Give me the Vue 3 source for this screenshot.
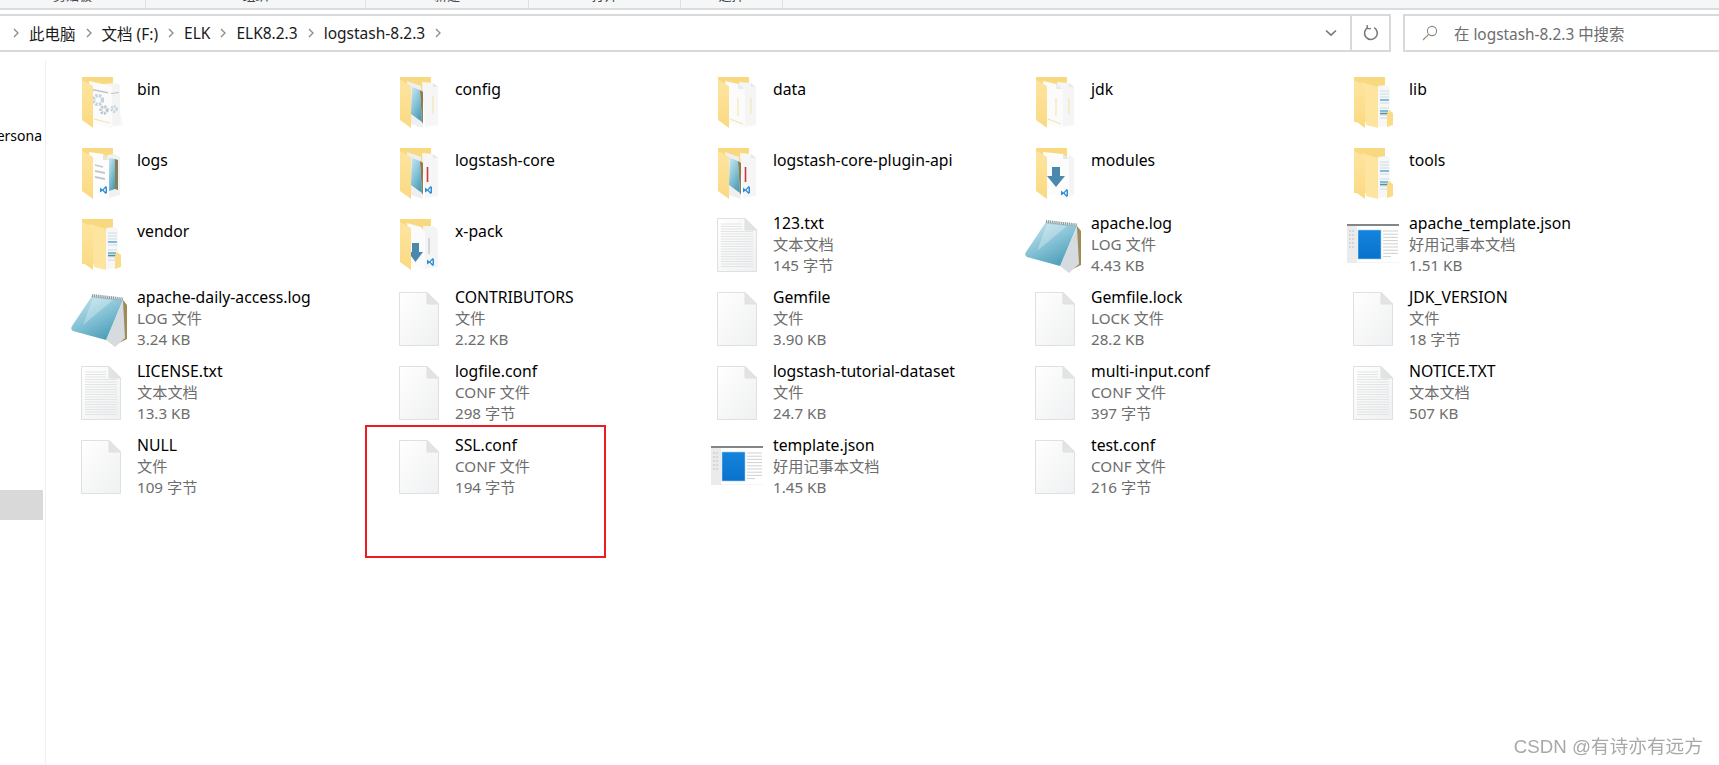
<script setup>
const ribbon = [
  { label: '剪贴板', width: 146 },
  { label: '组织', width: 220 },
  { label: '新建', width: 163 },
  { label: '打开', width: 152 },
  { label: '选择', width: 102 },
]
const crumbs = ['此电脑', '文档 (F:)', 'ELK', 'ELK8.2.3', 'logstash-8.2.3']
const files = [
  { name: 'bin', icon: 'f-gear' }, { name: 'config', icon: 'f-note' }, { name: 'data', icon: 'f-doc' }, { name: 'jdk', icon: 'f-doc' }, { name: 'lib', icon: 'f-strip' },
  { name: 'logs', icon: 'f-logs' }, { name: 'logstash-core', icon: 'f-core' }, { name: 'logstash-core-plugin-api', icon: 'f-core' }, { name: 'modules', icon: 'f-arrow' }, { name: 'tools', icon: 'f-strip' },
  { name: 'vendor', icon: 'f-strip' }, { name: 'x-pack', icon: 'f-pack' },
  { name: '123.txt', type: '文本文档', size: '145 字节', icon: 'txt' },
  { name: 'apache.log', type: 'LOG 文件', size: '4.43 KB', icon: 'pad' },
  { name: 'apache_template.json', type: '好用记事本文档', size: '1.51 KB', icon: 'tpl' },
  { name: 'apache-daily-access.log', type: 'LOG 文件', size: '3.24 KB', icon: 'pad' },
  { name: 'CONTRIBUTORS', type: '文件', size: '2.22 KB', icon: 'page' },
  { name: 'Gemfile', type: '文件', size: '3.90 KB', icon: 'page' },
  { name: 'Gemfile.lock', type: 'LOCK 文件', size: '28.2 KB', icon: 'page' },
  { name: 'JDK_VERSION', type: '文件', size: '18 字节', icon: 'page' },
  { name: 'LICENSE.txt', type: '文本文档', size: '13.3 KB', icon: 'txt' },
  { name: 'logfile.conf', type: 'CONF 文件', size: '298 字节', icon: 'page' },
  { name: 'logstash-tutorial-dataset', type: '文件', size: '24.7 KB', icon: 'page' },
  { name: 'multi-input.conf', type: 'CONF 文件', size: '397 字节', icon: 'page' },
  { name: 'NOTICE.TXT', type: '文本文档', size: '507 KB', icon: 'txt' },
  { name: 'NULL', type: '文件', size: '109 字节', icon: 'page' },
  { name: 'SSL.conf', type: 'CONF 文件', size: '194 字节', icon: 'page', marked: true },
  { name: 'template.json', type: '好用记事本文档', size: '1.45 KB', icon: 'tpl' },
  { name: 'test.conf', type: 'CONF 文件', size: '216 字节', icon: 'page' },
]
const txtLines = Array.from({ length: 18 }, (_, i) => 10 + i * 2.5)
const tplLines = Array.from({ length: 9 }, (_, i) => 17 + i * 3.2)
</script>

<template>
  <div class="window">
    <svg class="defs" width="0" height="0" aria-hidden="true">
      <defs>
        <linearGradient id="gPage" x1="0" y1="0" x2="1" y2="1">
          <stop offset="0" stop-color="#ffffff" />
          <stop offset="1" stop-color="#eff0f1" />
        </linearGradient>
        <linearGradient id="gFlap" x1="0" y1="0" x2="0" y2="1">
          <stop offset="0" stop-color="#fde5a0" />
          <stop offset="1" stop-color="#fbd981" />
        </linearGradient>
        <linearGradient id="gTeal" x1="0" y1="0" x2="0.6" y2="1">
          <stop offset="0" stop-color="#cfe8ef" />
          <stop offset="0.55" stop-color="#86c3d6" />
          <stop offset="1" stop-color="#4f9fba" />
        </linearGradient>
        <linearGradient id="gBlue" x1="0" y1="0" x2="0" y2="1">
          <stop offset="0" stop-color="#1384dc" />
          <stop offset="1" stop-color="#0a72cc" />
        </linearGradient>

        <g id="vs">
          <path d="M0 3.5 L2.5 5.5 L5.5 2 L7 3 V9 L5.5 10 L2.5 6.7 L0 8.5Z" fill="#2e8fd6" />
          <path d="M5.5 4 V8 L3.6 6Z" fill="#fff" />
        </g>
        <g id="back">
          <path d="M13 5 H44 V30 H13Z" fill="#f9d97f" />
        </g>
        <path id="flap" d="M13 8 L24 14 V56 L13 48Z" fill="url(#gFlap)" />
        <g id="sheets">
          <path d="M33 12 L47 11 L51 13 V52 L36 55Z" fill="#f4f4f4" />
          <path d="M20 9 L38 13 L43 15 V56 L24 51Z" fill="#fbfbfb" />
        </g>

        <g id="f-gear">
          <use href="#back" />
          <use href="#sheets" />
          <path d="M24 17 L39 20 V21.5 L24 18.5Z M42 21 L50 20 V21 L42 22Z" fill="#bfc3c6" />
          <circle cx="29" cy="28" r="4.5" fill="none" stroke="#c6d2db" stroke-width="3.4" stroke-dasharray="2.4 1.2" />
          <circle cx="35" cy="38" r="3.2" fill="none" stroke="#b8c6d0" stroke-width="3" stroke-dasharray="2 1" />
          <circle cx="45" cy="37" r="2.5" fill="none" stroke="#c6d2db" stroke-width="2.6" stroke-dasharray="1.8 1" />
          <path d="M25 47 L41 51" stroke="#f4e3a8" stroke-width="1" />
          <path d="M51 40 L54 53 L44 55Z" fill="#f2f2f2" opacity=".6" />
          <use href="#flap" />
        </g>
        <g id="f-note">
          <use href="#back" />
          <path d="M35 10 L46 11 L51 15 V53 L38 55Z" fill="#f6f6f6" />
          <path d="M46 11 V15 H51Z" fill="#e6e6e6" />
          <path d="M46 24 V42" stroke="#f4e3a8" stroke-width="1" />
          <path d="M20 9 L34 14 L36 56 L24 52Z" fill="#efefef" />
          <path d="M25 15 L33 18 L35 50 L24 42Z" fill="url(#gTeal)" />
          <path d="M33 18 L36 20 V52 L35 50Z" fill="#8a7d55" />
          <use href="#flap" />
        </g>
        <g id="f-core">
          <use href="#back" />
          <path d="M35 10 L46 11 L51 15 V53 L38 55Z" fill="#f6f6f6" />
          <path d="M46 11 V15 H51Z" fill="#e6e6e6" />
          <path d="M40.5 24 V39" stroke="#c73b3f" stroke-width="1.6" />
          <use href="#vs" transform="translate(38 41)" />
          <path d="M20 9 L34 14 L36 56 L24 52Z" fill="#efefef" />
          <path d="M25 15 L33 18 L35 50 L24 42Z" fill="url(#gTeal)" />
          <path d="M33 18 L36 20 V52 L35 50Z" fill="#8a7d55" />
          <use href="#flap" />
        </g>
        <g id="f-doc">
          <use href="#back" />
          <path d="M34 10 L46 11 L51 15 V53 L38 55Z" fill="#f5f5f5" />
          <path d="M46 11 V15 H51Z" fill="#e8e8e8" />
          <path d="M20 9 L33 12 L40 17 V56 L24 51Z" fill="#fbfbfb" />
          <path d="M33 12 V17 H40Z" fill="#ececec" />
          <path d="M33 26 V44 M46 26 V42" stroke="#f4e3a8" stroke-width="1" />
          <path d="M25 47 L38 52" stroke="#f4e3a8" stroke-width="1" />
          <use href="#flap" />
        </g>
        <g id="f-strip">
          <path d="M13 5 H44 V50 H13Z" fill="#f9d97f" />
          <path d="M37 14 L46 13 L49 16 V54 L37 55Z" fill="#f7f7f7" />
          <path d="M39 19 H48 M39 22 H48 M39 25 H48 M39 31 H48 M39 36 H48 M39 43 H48 M39 46 H48" stroke="#c9dce6" stroke-width="1" />
          <path d="M39 28 H48 M39 39 H47" stroke="#5ba9cf" stroke-width="1.6" />
          <path d="M39 41.5 H48" stroke="#5f8f8f" stroke-width="1.6" />
          <path d="M48 38 L52 41 V53 L46 55 V42Z" fill="#fbdc86" />
          <path d="M20 10 L37 15 V56 L25 53Z" fill="#fde5a0" />
          <use href="#flap" />
        </g>
        <g id="f-logs">
          <use href="#back" />
          <path d="M38 12 L45 11 L51 14 V52 L40 55Z" fill="#f1f1f1" />
          <path d="M40 15 L46 16 V46 L40 48Z" fill="url(#gTeal)" />
          <path d="M46 16 L49 17 V47 L46 46Z" fill="#8a7d55" />
          <path d="M20 9 L34 11 L40 17 V57 L24 51Z" fill="#fdfdfd" />
          <path d="M34 11 V17 H40Z" fill="#e9e6d8" />
          <path d="M26 22 L34 24 M26 28 L36 30 M26 34 L36 36" stroke="#c4c8cb" stroke-width="1.8" />
          <use href="#vs" transform="translate(31 41)" />
          <use href="#flap" />
        </g>
        <g id="f-arrow">
          <use href="#back" />
          <path d="M46 11 L51 15 V52 L42 55Z" fill="#f4f4f4" />
          <path d="M20 9 L40 11 L46 16 V55 L24 51Z" fill="#fcfcfc" />
          <path d="M40 11 V16 H46Z" fill="#e6e6e6" />
          <path d="M29 24 H37 V33 H42 L33 44 L24 33 H29Z" fill="#4a89ad" />
          <use href="#vs" transform="translate(38 44)" />
          <use href="#flap" />
        </g>
        <g id="f-pack">
          <use href="#back" />
          <path d="M36 12 L46 12 L51 15 V53 L38 55Z" fill="#f4f4f4" />
          <path d="M20 9 L34 13 L38 18 V56 L24 51Z" fill="#fbfbfb" />
          <path d="M25 29 H32 V38 H36 L28.5 48 L21 38 H25Z" fill="#4a89ad" />
          <path d="M42 24 V40" stroke="#c9cdd0" stroke-width="1.5" />
          <use href="#vs" transform="translate(40 42)" />
          <use href="#flap" />
        </g>

        <g id="page">
          <path d="M12.5 4.5 H40 L51.5 16 V57.5 H12.5Z" fill="url(#gPage)" stroke="#dfe0e1" />
          <path d="M40 4.5 V16 H51.5Z" fill="#e2e3e4" stroke="#dfe0e1" />
        </g>
        <g id="txt">
          <use href="#page" />
          <path v-for="y in txtLines" :key="y" :d="`M16 ${y} H${y < 17 ? 37 : 48}`" stroke="#e3e4e5" stroke-width="1" />
        </g>
        <g id="pad">
          <path d="M54 12 L58 17 L58 51 L50 55Z" fill="#9f8a58" />
          <path d="M37 52 L54 13 L56 50 L46 59Z" fill="#d5dbde" />
          <path d="M23 8 L54 12 L37 52 L4 43 Q1 41 3 38Z" fill="url(#gTeal)" />
          <path d="M24 10 L44 12 L14 37Z" fill="#fff" opacity=".28" />
          <path d="M23 7.5 L54 11" stroke="#8f9a9d" stroke-width="3" stroke-dasharray="1.2 .7" />
        </g>
        <g id="tpl">
          <path d="M6 10 H58 V49 H6Z" fill="#ebebeb" />
          <path d="M16 12 H58 V48.5 H16Z" fill="#ffffff" />
          <path d="M6 10 H58 V12 H6Z" fill="#80868a" />
          <path d="M8 17 H14 M8 21 H14 M8 25 H14 M8 29 H14 M8 33 H14" stroke="#bfc2c4" stroke-width="1" stroke-dasharray="2 1" />
          <path d="M17 16 H40 V45 H17Z" fill="url(#gBlue)" stroke="#9fcdf0" stroke-width=".6" />
          <path v-for="y in tplLines" :key="y" :d="`M42 ${y} H${y > 40 ? 50 : 57}`" stroke="#cfd0d1" stroke-width="1" />
        </g>
      </defs>
    </svg>

    <div class="ribbon">
      <div v-for="g in ribbon" :key="g.label" class="ribbon-group" :style="{ width: g.width + 'px' }">{{ g.label }}</div>
    </div>

    <div class="toolbar">
      <div class="address">
        <div class="crumbs">
          <template v-for="c in crumbs" :key="c">
            <svg class="chev" width="6" height="10" viewBox="0 0 6 10"><path d="M1 1 L5 5 L1 9" fill="none" stroke="#8a8a8a" stroke-width="1.3" /></svg>
            <span>{{ c }}</span>
          </template>
          <svg class="chev" width="6" height="10" viewBox="0 0 6 10"><path d="M1 1 L5 5 L1 9" fill="none" stroke="#8a8a8a" stroke-width="1.3" /></svg>
        </div>
        <div class="drop">
          <svg width="12" height="8" viewBox="0 0 12 8"><path d="M1 1.5 L6 6.2 L11 1.5" fill="none" stroke="#767676" stroke-width="1.6" /></svg>
        </div>
        <div class="refresh">
          <svg width="16" height="16" viewBox="0 0 16 16"><path d="M5 2.4 A6.4 6.4 0 1 0 11.2 2.6" fill="none" stroke="#7a7a7a" stroke-width="1.6" /><path d="M4.2 0 V3.6 H8" fill="none" stroke="#7a7a7a" stroke-width="1.4" /></svg>
        </div>
      </div>
      <div class="search">
        <svg width="16" height="16" viewBox="0 0 16 16"><circle cx="10" cy="6" r="4.6" fill="none" stroke="#8a8a8a" stroke-width="1.1" /><path d="M6.6 9.4 L1 15" stroke="#a58a6c" stroke-width="1.2" /></svg>
        <span>在 logstash-8.2.3 中搜索</span>
      </div>
    </div>

    <div class="body">
      <aside class="side">
        <div class="side-label"><span>ersona</span></div>
        <div class="side-active"></div>
      </aside>
      <main class="grid">
        <div v-for="f in files" :key="f.name" class="tile">
          <svg class="icon" width="64" height="64" viewBox="0 0 64 64"><use :href="'#' + f.icon" /></svg>
          <div class="info" :class="{ folder: !f.type }">
            <div class="name">{{ f.name }}</div>
            <div v-if="f.type" class="meta">{{ f.type }}</div>
            <div v-if="f.size" class="meta">{{ f.size }}</div>
          </div>
          <div v-if="f.marked" class="mark"></div>
        </div>
      </main>
    </div>

    <div class="watermark">CSDN @有诗亦有远方</div>
  </div>
</template>

<style>
html, body { margin: 0; background: #fff; overflow: hidden; }
</style>

<style scoped>
.window {
  position: relative;
  width: 1719px;
  height: 765px;
  overflow: hidden;
  background: #fff;
  color: #000;
  font-family: "Noto Sans", "Noto Sans CJK SC", sans-serif;
  font-size: 16px;
}
.defs { position: absolute; }
.ribbon {
  display: flex;
  height: 8px;
  box-sizing: content-box;
  overflow: hidden;
  background: #f5f6f7;
  border-bottom: 2px solid #dcdcdc;
}
.ribbon-group {
  box-sizing: border-box;
  text-align: center;
  font-size: 13px;
  line-height: 16px;
  margin-top: -13px;
  height: 40px;
  color: #444;
  border-right: 1px solid #dfe0e1;
}
.toolbar {
  display: flex;
  gap: 12px;
  margin-top: 4px;
  height: 38px;
}
.address {
  display: flex;
  align-items: center;
  box-sizing: border-box;
  width: 1391px;
  border: 2px solid #d9d9d9;
  border-left: 0;
  font-size: 15.5px;
}
.crumbs {
  flex: 1;
  display: flex;
  align-items: center;
  gap: 10px;
  padding-left: 13px;
  color: #1a1a1a;
}
.chev { flex: none; }
.drop {
  width: 38px;
  display: flex;
  justify-content: center;
}
.refresh {
  box-sizing: border-box;
  width: 39px;
  height: 100%;
  display: flex;
  align-items: center;
  justify-content: center;
  border-left: 2px solid #d9d9d9;
}
.search {
  flex: 1;
  display: flex;
  align-items: center;
  gap: 16px;
  padding-left: 17px;
  border: 2px solid #d9d9d9;
  border-right: 0;
  color: #6d6d6d;
  font-size: 15.4px;
}
.body {
  display: flex;
  margin-top: 8px;
  height: 705px;
}
.side {
  flex: none;
  box-sizing: border-box;
  width: 46px;
  border-right: 1px solid #f1f1f1;
  padding-top: 66px;
  overflow: hidden;
}
.side-label {
  display: flex;
  justify-content: flex-end;
  width: 42px;
  font-size: 14px;
  line-height: 20px;
  white-space: nowrap;
}
.side-active {
  width: 43px;
  height: 30px;
  margin-top: 344px;
  background: #d9d9d9;
}
.grid {
  display: grid;
  grid-template-columns: repeat(5, 318px);
  grid-template-rows: 71px 71px repeat(4, 74px);
  padding: 8px 0 0 23px;
}
.tile {
  position: relative;
  display: flex;
  gap: 4px;
}
.icon {
  flex: none;
  margin-top: 4px;
}
.info {
  padding-top: 3px;
  line-height: 20.8px;
}
.info.folder { padding-top: 11px; }
.name { white-space: nowrap; font-size: 15.75px; }
.meta { color: #6d6d6d; white-space: nowrap; font-size: 15.2px; }
.mark {
  position: absolute;
  left: -22px;
  top: -7px;
  box-sizing: border-box;
  width: 241px;
  height: 133px;
  border: 2px solid #ed1c24;
}
.watermark {
  position: absolute;
  right: 16px;
  bottom: 6px;
  font-family: "Liberation Sans", "Noto Sans CJK SC", sans-serif;
  font-size: 18.7px;
  line-height: 24px;
  color: #a8a8a8;
  filter: blur(0.3px);
}
</style>
